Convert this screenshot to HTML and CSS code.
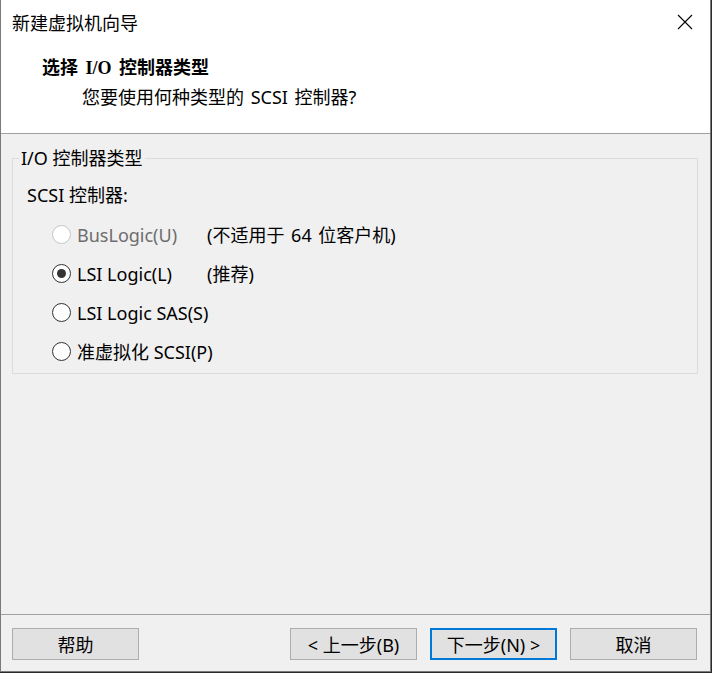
FILE: index.html
```html
<!DOCTYPE html>
<html lang="zh-CN">
<head>
    <meta charset="UTF-8">
    <meta name="viewport" content="width=device-width, initial-scale=1.0">
    <title>新建虚拟机向导</title>
    <link rel="stylesheet" href="styles.css">
</head>
<body>
    <div class="window">
        <div class="title-bar">
            <span class="title">新建虚拟机向导</span>
            <button class="close-btn" aria-label="关闭">
                <svg width="16" height="16" viewBox="0 0 16 16">
                    <path d="M1 1 L15 15 M15 1 L1 15" stroke="#000" stroke-width="1.1" fill="none"/>
                </svg>
            </button>
        </div>
        <div class="header">
            <div class="header-title">选择 I/O 控制器类型</div>
            <div class="header-sub">您要使用何种类型的 SCSI 控制器?</div>
        </div>

        <div class="main">
            <fieldset class="group">
                <legend>I/O 控制器类型</legend>
                <div class="group-body">
                    <div class="field-label">SCSI 控制器:</div>
                    <div class="options">
                        <label class="option disabled">
                            <input type="radio" name="scsi" disabled>
                            <span>BusLogic(U)</span>
                        </label>
                        <span class="note">(不适用于 64 位客户机)</span>

                        <label class="option">
                            <input type="radio" name="scsi" checked>
                            <span>LSI Logic(L)</span>
                        </label>
                        <span class="note">(推荐)</span>

                        <label class="option">
                            <input type="radio" name="scsi">
                            <span>LSI Logic SAS(S)</span>
                        </label>
                        <span class="note"></span>

                        <label class="option">
                            <input type="radio" name="scsi">
                            <span>准虚拟化 SCSI(P)</span>
                        </label>
                        <span class="note"></span>
                    </div>
                </div>
            </fieldset>
        </div>

        <div class="footer">
            <button class="btn">帮助</button>
            <div class="nav-buttons">
                <button class="btn">&lt; 上一步(B)</button>
                <button class="btn btn-default">下一步(N) &gt;</button>
                <button class="btn">取消</button>
            </div>
        </div>
    </div>
</body>
</html>
```

FILE: styles.css
```css
body {
    margin: 0;
    padding: 0;
    background-color: #2b2b2b;
    font-family: "Noto Sans", "Noto Sans CJK SC", sans-serif;
    font-size: 18px;
    color: #000;
}
.window {
    width: 711px;
    height: 672px;
    box-sizing: border-box;
    border: 1px solid #7a7a7a;
    border-top: none;
    background-color: #f0f0f0;
    display: flex;
    flex-direction: column;
}
.title-bar {
    height: 44px;
    background-color: #fff;
    display: flex;
    align-items: center;
    justify-content: space-between;
    padding-left: 11px;
}
.title {
    font-family: "Noto Sans CJK SC", sans-serif;
    line-height: 24px;
    margin-top: -1px;
}
.close-btn {
    width: 46px;
    height: 44px;
    border: none;
    background: transparent;
    padding: 0;
    display: flex;
    align-items: center;
    justify-content: center;
    margin-right: 2px;
    margin-top: -1px;
}
.header {
    background-color: #fff;
    border-bottom: 1px solid #a0a0a0;
    padding: 12px 0 24px 0;
}
.header-title {
    font-family: "Liberation Serif", "Noto Sans CJK SC", serif;
    font-weight: bold;
    line-height: 24px;
    padding-left: 41px;
    word-spacing: 3px;
}
.header-sub {
    line-height: 24px;
    margin-top: 5px;
    padding-left: 81px;
    word-spacing: 2px;
}
.main {
    flex: 1;
}
.group {
    margin: 12px 12px 0 11px;
    padding: 0 0 2px 0;
    border: 1px solid #dcdcdc;
    min-width: 0;
}
.group legend {
    margin-left: 6px;
    padding: 0 2px;
    line-height: 24px;
}
.group-body {
    padding-left: 14px;
}
.field-label {
    line-height: 24px;
    margin-top: 13px;
}
.options {
    display: grid;
    grid-template-columns: 155px auto;
    grid-auto-rows: 39px;
    margin-top: 8px;
    padding-left: 25px;
    align-items: center;
}
.option {
    display: flex;
    align-items: center;
    gap: 6px;
    line-height: 24px;
    white-space: nowrap;
}
.option input {
    appearance: none;
    -webkit-appearance: none;
    width: 19px;
    height: 19px;
    margin: 0;
    border: 1.5px solid #333;
    border-radius: 50%;
    background-color: #fff;
    box-sizing: border-box;
    display: grid;
    place-items: center;
    flex-shrink: 0;
}
.option input:checked::before {
    content: "";
    width: 9px;
    height: 9px;
    border-radius: 50%;
    background-color: #333;
}
.option.disabled {
    color: #6d6d6d;
}
.option.disabled input {
    border-color: #c6c6c6;
}
.note {
    line-height: 24px;
    word-spacing: 2px;
    white-space: nowrap;
}
.footer {
    border-top: 1px solid #a0a0a0;
    height: 57px;
    display: flex;
    justify-content: space-between;
    padding: 13px 13px 0 11px;
    box-sizing: border-box;
}
.nav-buttons {
    display: flex;
    gap: 13px;
}
.btn {
    width: 127px;
    height: 32px;
    background-color: #e1e1e1;
    border: 1px solid #adadad;
    font-family: inherit;
    font-size: 18px;
    color: #000;
    padding: 0;
}
.btn-default {
    border: 2px solid #0078d7;
}
```
